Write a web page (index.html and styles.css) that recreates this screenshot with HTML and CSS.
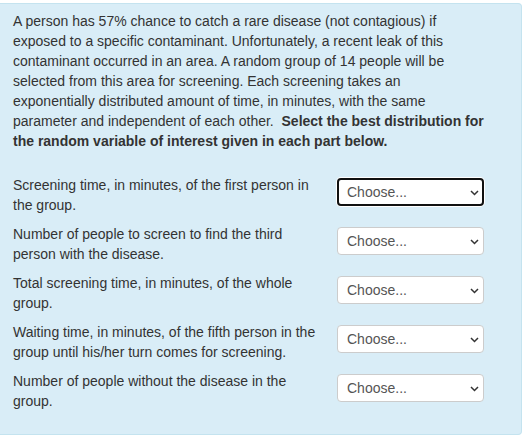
FILE: index.html
```html
<!DOCTYPE html>
<html>
<head>
<meta charset="utf-8">
<link rel="stylesheet" href="styles.css">
</head>
<body>
<div class="formulation">
  <p class="qtext">A person has 57% chance to catch a rare disease (not contagious) if exposed to a specific contaminant. Unfortunately, a recent leak of this contaminant occurred in an area. A random group of 14 people will be selected from this area for screening. Each screening takes an exponentially distributed amount of time, in minutes, with the same parameter and independent of each other.&nbsp; <strong>Select the best distribution for the random variable of interest given in each part below.</strong></p>
  <div class="answers">
    <div class="stem">Screening time, in minutes, of the first person in the group.</div>
    <div class="control">
      <select class="choice focused"><option>Choose...</option></select>
      <svg class="chev" width="9" height="6" viewBox="0 0 9 6"><path d="M1 1 L4.5 4.5 L8 1" fill="none" stroke="#333" stroke-width="1.5"/></svg>
    </div>
    <div class="stem">Number of people to screen to find the third person with the disease.</div>
    <div class="control">
      <select class="choice"><option>Choose...</option></select>
      <svg class="chev" width="9" height="6" viewBox="0 0 9 6"><path d="M1 1 L4.5 4.5 L8 1" fill="none" stroke="#333" stroke-width="1.5"/></svg>
    </div>
    <div class="stem">Total screening time, in minutes, of the whole group.</div>
    <div class="control">
      <select class="choice"><option>Choose...</option></select>
      <svg class="chev" width="9" height="6" viewBox="0 0 9 6"><path d="M1 1 L4.5 4.5 L8 1" fill="none" stroke="#333" stroke-width="1.5"/></svg>
    </div>
    <div class="stem">Waiting time, in minutes, of the fifth person in the group until his/her turn comes for screening.</div>
    <div class="control">
      <select class="choice"><option>Choose...</option></select>
      <svg class="chev" width="9" height="6" viewBox="0 0 9 6"><path d="M1 1 L4.5 4.5 L8 1" fill="none" stroke="#333" stroke-width="1.5"/></svg>
    </div>
    <div class="stem">Number of people without the disease in the group.</div>
    <div class="control">
      <select class="choice"><option>Choose...</option></select>
      <svg class="chev" width="9" height="6" viewBox="0 0 9 6"><path d="M1 1 L4.5 4.5 L8 1" fill="none" stroke="#333" stroke-width="1.5"/></svg>
    </div>
  </div>
</div>
</body>
</html>
```
FILE: styles.css
```css
html, body {
  margin: 0;
  padding: 0;
  background: #ffffff;
}
body {
  font-family: "Liberation Sans", Arial, sans-serif;
  font-size: 14px;
  line-height: 20px;
  color: #333333;
}
.formulation {
  box-sizing: border-box;
  width: 522px;
  margin-top: 3px;
  background: #d9edf7;
  border: 1px solid #c4e3ef;
  border-left: none;
  border-radius: 0 4px 4px 0;
  padding: 7px 38px 23px 13px;
}
.qtext {
  margin: 0 0 24px 0;
  width: 471px;
}
.qtext strong {
  font-weight: bold;
}
.answers {
  display: grid;
  grid-template-columns: 310px 147px;
  column-gap: 14px;
  row-gap: 9px;
}
.stem {
  min-height: 40px;
}
.control {
  position: relative;
  padding-top: 3px;
  height: 28px;
}
.choice {
  -webkit-appearance: none;
  appearance: none;
  box-sizing: border-box;
  width: 147px;
  height: 28px;
  margin: 0;
  padding: 0 24px 0 9px;
  background: #ffffff;
  border: 1px solid #cccccc;
  border-radius: 4px;
  font-family: "Liberation Sans", Arial, sans-serif;
  font-size: 14px;
  color: #555555;
  outline: none;
}
.choice.focused {
  border: 2px solid #111111;
  padding-left: 8px;
  box-shadow: 0 0 0 1px #ffffff;
}
.chev {
  position: absolute;
  right: 5px;
  top: 15px;
}
```
